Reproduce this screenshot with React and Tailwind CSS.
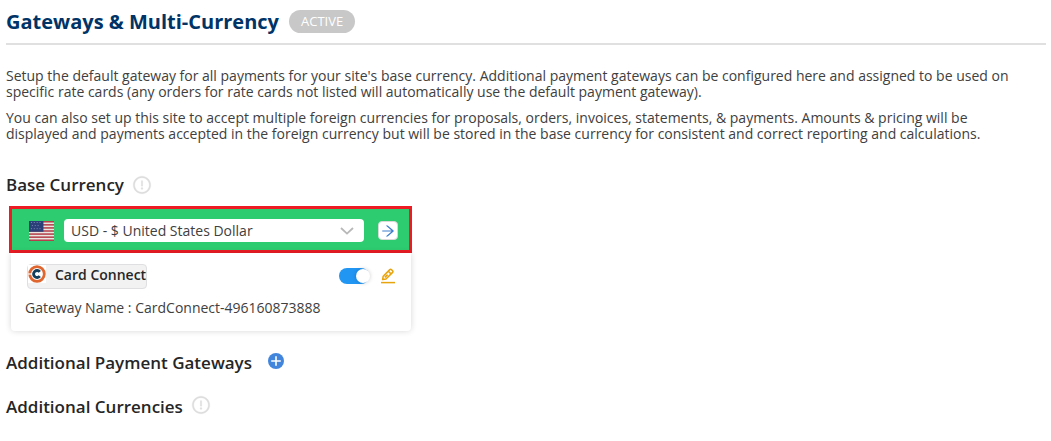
import React from "react";
import { AiOutlineArrowRight, AiOutlineExclamationCircle } from "react-icons/ai";

const STRIPES = [0, 2, 4, 6, 8, 10, 12];
const STARS = [
  [1, 1], [4, 1], [7, 1], [10, 1],
  [2, 3], [5, 3], [8, 3],
  [1, 5], [4, 5], [7, 5], [10, 5],
];

const UsFlag = () => (
  <svg
    className="w-[25px] h-5 shrink-0"
    viewBox="0 0 26 13"
    preserveAspectRatio="none"
    role="img"
    aria-label="United States"
  >
    <rect width="26" height="13" fill="#e9e6e2" />
    {STRIPES.map((y) => (
      <rect key={y} y={y} width="26" height="1" fill="#b5404b" />
    ))}
    <rect width="15" height="7" fill="#2b3f78" />
    {STARS.map(([x, y]) => (
      <rect key={`${x}-${y}`} x={x + 1} y={y - 0.3} width="0.9" height="0.6" fill="#8f9cc0" />
    ))}
  </svg>
);

const CardConnectLogo = () => (
  <svg className="w-[18px] h-[18px] shrink-0" viewBox="0 0 18 18" aria-hidden="true">
    <rect width="18" height="18" fill="#ffffff" />
    <circle cx="9" cy="9" r="7.3" fill="none" stroke="#e0662f" strokeWidth="2.8" />
    <path d="M0 9h4" stroke="#ffffff" strokeWidth="1.2" />
    <path
      d="M11.8 6.8A3.5 3.5 0 1 0 11.8 11.2"
      fill="none"
      stroke="#143f5c"
      strokeWidth="2.9"
    />
  </svg>
);

const ChevronDown = () => (
  <svg
    className="absolute right-2.5 top-2 w-3.5 h-2 pointer-events-none"
    viewBox="0 0 14 8"
    fill="none"
    stroke="#b8b8b8"
    strokeWidth="1.8"
    aria-hidden="true"
  >
    <path d="M1 1l6 5.6L13 1" />
  </svg>
);

const EditIcon = () => (
  <svg
    className="w-4 h-4"
    viewBox="0 0 16 16"
    fill="none"
    stroke="currentColor"
    strokeWidth="1.5"
    strokeLinejoin="round"
    aria-hidden="true"
  >
    <path d="M2.6 11.6l.6-3.4 6.6-6.6q.8-.7 1.6 0l1.2 1.2q.7.8 0 1.6L6 11z" />
    <path d="M8.3 3.2l2.7 2.7M4.8 9.4l2.8-2.8" />
    <path d="M1 14.6h14" />
  </svg>
);

const PlusCircle = () => (
  <svg className="w-4 h-4" viewBox="0 0 16 16" aria-hidden="true">
    <circle cx="8" cy="8" r="8" fill="currentColor" />
    <path d="M8 3.2v9.6M3.2 8h9.6" stroke="#ffffff" strokeWidth="1.6" />
  </svg>
);

const InfoButton = ({ label }) => (
  <button type="button" aria-label={label} className="text-[#dddddd]">
    <AiOutlineExclamationCircle className="w-5 h-5 stroke-[16]" />
  </button>
);

const BaseCurrencyCard = () => (
  <div className="mt-2 ml-[3px] w-full max-w-[403px]">
    <div className="flex items-center h-[47px] pt-0.5 pl-[17px] pr-[11px] bg-[#2ecc71] border-[3px] border-[#ed1c24]">
      <UsFlag />
      <div className="relative flex-1 ml-2.5">
        <select
          aria-label="Base currency"
          defaultValue="USD"
          className="block w-full h-[23px] pt-px pl-[7px] pr-8 appearance-none bg-white rounded-sm text-sm leading-5 text-[#404040]"
        >
          <option value="USD">USD - $ United States Dollar</option>
        </select>
        <ChevronDown />
      </div>
      <button
        type="button"
        aria-label="Apply currency"
        className="flex items-center justify-center w-5 h-[19px] ml-3.5 bg-white border border-[#d9d9d9] rounded-sm text-[#3f7fce]"
      >
        <AiOutlineArrowRight className="w-4 h-4" />
      </button>
    </div>

    <div className="ml-0.5 mr-px pt-[11px] pb-[13px] px-3.5 bg-white rounded-b-sm shadow-[0_0_6px_rgba(0,0,0,0.16)]">
      <div className="flex items-start">
        <div className="flex items-start h-[25px] ml-0.5 bg-[#f2f2f2] border border-[#dfdfe2] rounded-sm">
          <CardConnectLogo />
          <span className="ml-[9px] text-sm leading-5 font-semibold text-[#262626]">
            Card Connect
          </span>
        </div>
        <label className="relative w-8 h-4 mt-1 ml-auto cursor-pointer">
          <input
            type="checkbox"
            defaultChecked
            aria-label="Enable Card Connect"
            className="peer block w-[30px] h-4 appearance-none rounded-full bg-gray-300 checked:bg-[#2196f3]"
          />
          <span className="absolute top-px left-px w-3.5 h-3.5 rounded-full bg-white shadow-[0_0_4px_rgba(0,0,0,0.2)] pointer-events-none peer-checked:left-[17px]" />
        </label>
        <button
          type="button"
          aria-label="Edit gateway"
          className="mt-1 ml-[9px] mr-px text-[#e8a40c]"
        >
          <EditIcon />
        </button>
      </div>
      <p className="mt-[9px] text-sm leading-5">Gateway Name : CardConnect-496160873888</p>
    </div>
  </div>
);

const App = () => {
  return (
    <main className="pl-1.5 pr-[5px] pb-5 font-['Open_Sans','Noto_Sans',sans-serif] text-sm text-[#404040] bg-white">
      <header className="flex items-center gap-2.5 h-[45px] border-b-2 border-[#e0e0e0]">
        <h1 className="text-xl leading-7 font-bold text-[#003366]">Gateways &amp; Multi-Currency</h1>
        <span className="flex items-center h-[23px] px-3 rounded-full bg-[#c8c8c8] text-[13px] text-white">
          ACTIVE
        </span>
      </header>

      <div className="mt-[23px] pr-5 space-y-2.5 text-sm leading-4">
        <p>
          Setup the default gateway for all payments for your site's base currency. Additional
          payment gateways can be configured here and assigned to be used on specific rate cards
          (any orders for rate cards not listed will automatically use the default payment gateway).
        </p>
        <p>
          You can also set up this site to accept multiple foreign currencies for proposals, orders,
          invoices, statements, &amp; payments. Amounts &amp; pricing will be displayed and payments
          accepted in the foreign currency but will be stored in the base currency for consistent
          and correct reporting and calculations.
        </p>
      </div>

      <section className="pt-[31px]">
        <div className="flex items-center gap-2 pb-px">
          <h2 className="text-[17px] leading-6 font-semibold text-[#262626]">Base Currency</h2>
          <InfoButton label="About base currency" />
        </div>
        <BaseCurrencyCard />
      </section>

      <section className="flex items-start gap-4 mt-5">
        <h2 className="text-[17px] leading-6 font-semibold text-[#262626]">
          Additional Payment Gateways
        </h2>
        <button type="button" aria-label="Add payment gateway" className="mt-0.5 text-[#4285dc]">
          <PlusCircle />
        </button>
      </section>

      <section className="flex items-start gap-2 mt-5">
        <h2 className="text-[17px] leading-6 font-semibold text-[#262626]">
          Additional Currencies
        </h2>
        <InfoButton label="About additional currencies" />
      </section>
    </main>
  );
};

export default App;
